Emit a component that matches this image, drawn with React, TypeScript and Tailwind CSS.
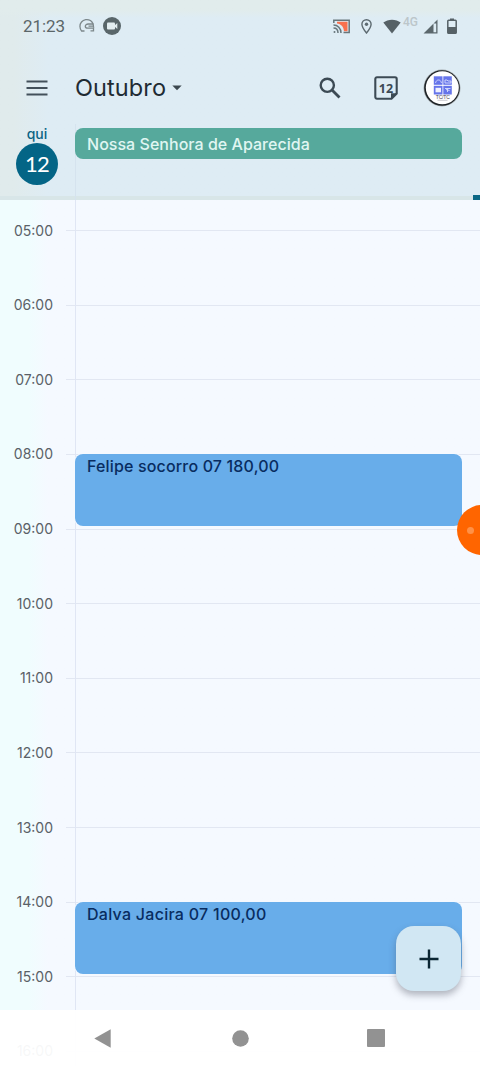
import React from "react";

const HOURS = [
  "05:00",
  "06:00",
  "07:00",
  "08:00",
  "09:00",
  "10:00",
  "11:00",
  "12:00",
  "13:00",
  "14:00",
  "15:00",
  "16:00",
];

const HOUR_HEIGHT = 74.63;
const FIRST_HOUR = 5;
const FIRST_LINE = 30;

const EVENTS = [
  { title: "Felipe socorro 07 180,00", start: 8, tracking: "tracking-[0.16px]" },
  { title: "Dalva Jacira 07 100,00", start: 14, tracking: "tracking-[0.27px]" },
];

const StatusBar: React.FC = () => (
  <div className="flex h-[52px] items-center pl-[23px] pr-[23px] text-[#5b6668]">
    <span className="w-[56px] font-['Roboto'] text-[17px] leading-none tracking-[-0.1px]">
      21:23
    </span>
    <svg width="16" height="16" viewBox="0 0 16 16" fill="none" stroke="#7c878a" strokeWidth="1.3">
      <path d="M5.500 13H2.600C.5 10.500.3 6.500 2.500 4 4.600 1.400 8.600.8 11.400 2.500c2.300 1.500 3.200 4 3.200 7.300" />
      <path d="M14.500 6H9.200C7.400 6 6.300 7 6.300 8.200s1.100 2 2.500 2h5.700v2.600h-3M9.500 8.100h4.800" />
    </svg>
    <svg className="ml-[8px]" width="18" height="18" viewBox="0 0 18 18">
      <circle cx="9" cy="9" r="9" fill="#59666a" />
      <rect x="4" y="5.500" width="8" height="7" rx="1" fill="#e3eef1" />
      <path d="M11.500 8.500 14.300 6v6l-2.800-2.500z" fill="#e3eef1" />
    </svg>
    <div className="ml-auto flex items-center">
      <svg width="17" height="15" viewBox="0 0 17 15" fill="none" stroke="#68767b" strokeWidth="1.500">
        <path d="M4 2.800h10.500v9.400H11C10.500 7.500 8 5 4 4.500z" fill="#f8714f" stroke="none" />
        <path d="M.8 4V1.200h15.400v12.300H10.500" />
        <path d="M.5 6c4.200 0 7.500 3.300 7.500 8M.5 9c2.600 0 4.500 2 4.500 5" />
        <circle cx="1.500" cy="13" r="1" fill="#68767b" stroke="none" />
      </svg>
      <svg className="ml-[11px]" width="11" height="15" viewBox="0 0 11 15">
        <path
          d="M5.500.8C2.900.8.900 2.800.900 5.300c0 3.200 4.600 8.700 4.600 8.700s4.600-5.500 4.600-8.700C10.100 2.800 8.100.8 5.500.8z"
          fill="none"
          stroke="#5d6a70"
          strokeWidth="1.400"
        />
        <circle cx="5.500" cy="5.300" r="1.700" fill="#5d6a70" />
      </svg>
      <svg className="ml-[11px]" width="18" height="15" viewBox="0 0 18 15">
        <path d="M9 14.500.3 3.600C5-.3 13-.3 17.700 3.600z" fill="#566166" />
      </svg>
      <span className="mb-2 ml-[2px] w-4 font-['Roboto'] text-[12px] font-medium leading-none text-[#bcc6ca]">
        4G
      </span>
      <svg className="ml-[4px]" width="15" height="15" viewBox="0 0 15 15">
        <path d="M14.500.5v14H.5zM13.200 4.500h-2.700v8.700h2.700z" fill="#5b676c" fillRule="evenodd" />
      </svg>
      <svg className="ml-[9px]" width="10" height="16" viewBox="0 0 10 16">
        <path d="M3 .5h4v2H3z" fill="#566166" />
        <rect x=".8" y="2.300" width="8.400" height="12.900" rx=".8" fill="none" stroke="#566166" strokeWidth="1.500" />
        <path d="M.8 9h8.400v6H.8z" fill="#566166" />
      </svg>
    </div>
  </div>
);

const Avatar: React.FC = () => (
  <svg width="38" height="38" viewBox="0 0 38 38">
    <circle cx="19" cy="19" r="18.500" fill="#a4abae" />
    <circle cx="19" cy="19" r="17.800" fill="#1d2226" />
    <circle cx="19.300" cy="18.800" r="16.500" fill="#fff" />
    <g fill="#6675ea">
      <rect x="10.800" y="7.300" width="8.700" height="8.500" />
      <rect x="20.300" y="7.300" width="8.500" height="8.500" />
      <rect x="10.800" y="16.800" width="8.700" height="8.700" />
      <rect x="20.300" y="16.800" width="8.500" height="8.700" />
    </g>
    <g fill="none" stroke="#d7dcff" strokeWidth=".9">
      <path d="M12.500 14c.5-2 1.500-3 3-3s2.500 1 3 3M22 11h2l1 1h3v2h-6zM22 19.500h5.500M24.500 19.500v3.500M23 20.500l3.500 1" />
    </g>
    <rect x="12.500" y="18.800" width="5.500" height="4.500" fill="#eef0ff" />
    <text x="19.800" y="29.600" textAnchor="middle" fontFamily="Liberation Sans" fontSize="5" fill="#4a4350" textLength="14">
      TC/TC
    </text>
    <path d="M14.500 31.300h10" stroke="#b5b3ba" strokeWidth=".7" />
  </svg>
);

const Toolbar: React.FC = () => (
  <div className="flex h-[72px] items-center pl-[26px] pr-[19px] text-[#3c484f]">
    <svg width="22" height="16" viewBox="0 0 22 16" stroke="#43505a" strokeWidth="2.200">
      <path d="M.5 1.500h21M.5 8h21M.5 14.500h21" />
    </svg>
    <h1 className="ml-[27px] w-[91px] whitespace-nowrap text-[23.500px] leading-none tracking-[0.1px] text-[#1f2b33]">
      Outubro
    </h1>
    <svg className="ml-[6px]" width="10" height="6" viewBox="0 0 10 6">
      <path d="M.3.500h9.400L5 5.300z" fill="#3c484f" />
    </svg>
    <svg className="ml-auto" width="22" height="22" viewBox="0 0 22 22" fill="none" stroke="#3c4a54" strokeWidth="2.400">
      <circle cx="8.300" cy="8.300" r="6.600" />
      <path d="m13 13 7.500 7.500" strokeWidth="2.800" />
    </svg>
    <svg className="ml-[33px]" width="24" height="24" viewBox="0 0 24 24">
      <path
        d="M3 1.300h18c1 0 1.700.7 1.700 1.700v14.500l-5.200 5.200H3c-1 0-1.700-.7-1.700-1.700V3c0-1 .7-1.700 1.700-1.700z"
        fill="none"
        stroke="#3c4a54"
        strokeWidth="2.100"
      />
      <path d="M22.500 17.200v.5l-5 5h-.5v-5.500z" fill="#3c4a54" />
      <text x="12" y="16.600" textAnchor="middle" fontFamily="Open Sans" fontWeight="700" fontSize="12.500" fill="#3c4a54">
        12
      </text>
    </svg>
    <div className="ml-[25px]">
      <Avatar />
    </div>
  </div>
);

const DayHeader: React.FC = () => (
  <div className="flex h-[76px]">
    <div className="mr-px flex w-[74px] flex-col items-center text-[#0b6484]">
      <span className="mt-px text-[14px] font-medium leading-[18px]">qui</span>
      <div className="flex size-[42px] items-center justify-center rounded-full bg-[#046586] font-['Lato'] text-[22px] leading-none tracking-[-0.8px] text-white">
        12
      </div>
    </div>
    <div className="flex-1 border-l border-[#d5e3ee] pr-[18px] pt-1">
      <div className="-ml-px flex h-[31px] items-center rounded-[8px] bg-[#56a99c] pl-3 text-[16px] font-medium tracking-[0.03px] text-[#e0f6f2]">
        <span className="whitespace-nowrap">Nossa Senhora de Aparecida</span>
      </div>
    </div>
  </div>
);

const HourGrid: React.FC = () => (
  <div className="relative h-[866px] overflow-hidden bg-gradient-to-r from-[#f0fdfe] from-6% to-[#f5f9ff] to-10%">
    <div className="-mt-[6.8px]">
      {HOURS.map((hour) => (
        <div key={hour} className="flex h-[74.63px] items-center">
          <span className="w-[53px] text-right text-[14px] leading-none text-[#5a6167]">
            {hour}
          </span>
          <div className="ml-[13px] h-px flex-1 bg-[#e2e7f2]" />
        </div>
      ))}
    </div>
    <div className="absolute inset-y-0 left-[75px] w-px bg-[#e0e6f4]" />
    {EVENTS.map((event) => (
      <div
        key={event.title}
        className="absolute left-[75px] right-[18px] h-[72px] rounded-[8px] bg-[#68adea] pl-3 pt-[2px] ring-1 ring-[#f5f9ff]"
        style={{ top: FIRST_LINE + (event.start - FIRST_HOUR) * HOUR_HEIGHT + 0.1 }}
      >
        <span className={`block whitespace-nowrap text-[16px] font-medium leading-[21px] text-[#082c60] ${event.tracking}`}>
          {event.title}
        </span>
      </div>
    ))}
  </div>
);

const NavigationBar: React.FC = () => (
  <div className="absolute inset-x-0 bottom-0 flex h-14 items-center bg-white/95 pl-[94px] text-[#929292]">
    <svg width="17" height="19" viewBox="0 0 17 19" fill="currentColor">
      <path d="M16.700.300v18.400L.3 9.500z" />
    </svg>
    <svg className="ml-[121px]" width="17" height="17" viewBox="0 0 17 17" fill="currentColor">
      <circle cx="8.500" cy="8.500" r="8.300" />
    </svg>
    <div className="ml-[118px] size-[18px] rounded-[1px] bg-[#929292]" />
  </div>
);

const App: React.FC = () => {
  return (
    <div className="relative h-[1066px] w-[480px] overflow-hidden bg-white font-['Inter',sans-serif]">
      <header className="relative h-[200px] border-b-4 border-[#d8e6e8] bg-[#deecf4] bg-gradient-to-r from-[#e0ebec] from-3% to-[#deecf4] to-10%">
        <div className="bg-gradient-to-b from-[#e1ecec] from-5% to-transparent to-9%">
          <StatusBar />
          <Toolbar />
          <DayHeader />
        </div>
        <div className="absolute -bottom-1 right-0 h-[5px] w-[7px] bg-[#0b6785]" />
      </header>
      <HourGrid />
      <button className="absolute left-[396px] top-[926px] flex size-[65px] items-center justify-center rounded-[18px] bg-[#d1e7f3] shadow-[0_4px_7px_rgba(70,75,90,0.4)]">
        <svg width="20" height="20" viewBox="0 0 20 20" stroke="#0b2633" strokeWidth="2.400">
          <path d="M10 .5v19M.5 10h19" />
        </svg>
      </button>
      <div className="absolute left-[457px] top-[505px] size-[50px] rounded-full bg-[#ff6500]">
        <div className="ml-[10px] mt-[22px] size-[7px] rounded-full bg-[#ff9147]" />
      </div>
      <NavigationBar />
    </div>
  );
};

export default App;
